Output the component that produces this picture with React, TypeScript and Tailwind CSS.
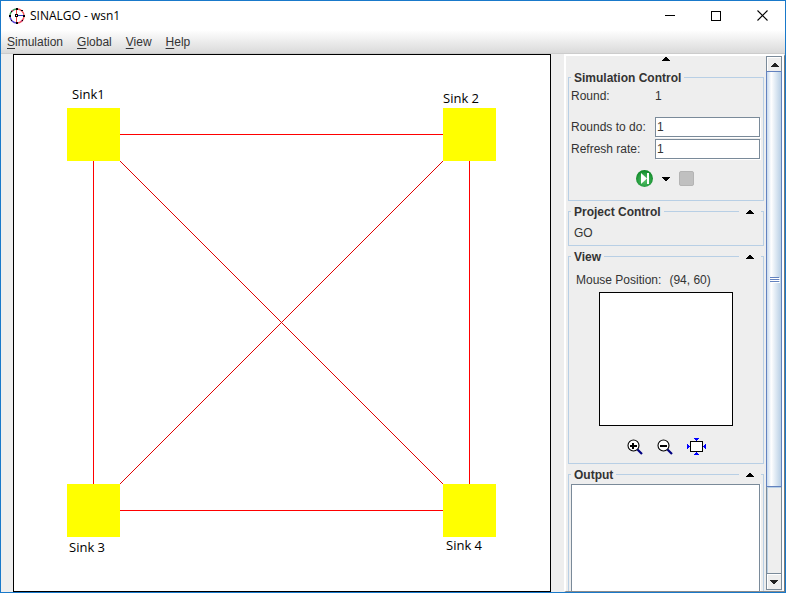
import React, { useState } from "react";

const NODES = [
  { name: "Sink1", box: "left-[53px] top-[53px]", label: "left-[58px] top-[31px]" },
  { name: "Sink 2", box: "left-[429px] top-[53px]", label: "left-[429px] top-[35px]" },
  { name: "Sink 3", box: "left-[53px] top-[429px]", label: "left-[55px] top-[484px]" },
  { name: "Sink 4", box: "left-[429px] top-[429px]", label: "left-[432px] top-[482px]" },
];

const MENUS = ["Simulation", "Global", "View", "Help"];

function Arrow({ down = false }: { down?: boolean }) {
  return (
    <svg width="8" height="4" viewBox="0 0 8 4" shapeRendering="crispEdges" aria-hidden="true">
      {down ? (
        <path d="M0 0h8v1H0zM1 1h6v1H1zM2 2h4v1H2zM3 3h2v1H3z" fill="currentColor" />
      ) : (
        <path d="M3 0h2v1H3zM2 1h4v1H2zM1 2h6v1H1zM0 3h8v1H0z" fill="currentColor" />
      )}
    </svg>
  );
}

function AppIcon() {
  return (
    <svg width="16" height="16" viewBox="0 0 16 16" aria-hidden="true">
      <g fill="none" strokeWidth="1.5">
        <path d="M8 1A7 7 0 0 1 15 8" stroke="#f0525c" />
        <path d="M15 8A7 7 0 0 1 8 15" stroke="#f0525c" />
        <path d="M8 15A7 7 0 0 1 1 8" stroke="#5a48d0" />
        <path d="M1 8A7 7 0 0 1 8 1" stroke="#3a9a5a" />
        <path d="M2.500 3.800 4 2.300M12 13.600l1.500-1.500" stroke="#d03a70" />
      </g>
      <g shapeRendering="crispEdges">
        <path d="M7 2h1v12H7z" fill="#f04040" />
        <path d="M9 7h5v1H9z" fill="#3434c8" />
        <path d="M7 0h2v2H7zM7 14h2v2H7zM0 7h2v2H0zM14 7h2v2h-2zM6 6h3v3H6zM2 3h1v1H2zM12 2h2v1h-2zM2 12h1v1H2zM13 12h1v1h-1z" fill="#000" />
        <path d="M7 7h1v1H7z" fill="#fff" />
      </g>
    </svg>
  );
}

function RunIcon() {
  return (
    <svg width="17" height="17" viewBox="0 0 17 17" aria-hidden="true">
      <defs>
        <radialGradient id="run" cx="0.5" cy="0.6" r="0.55">
          <stop offset="0" stopColor="#5cc46c" />
          <stop offset="0.6" stopColor="#2fa548" />
          <stop offset="1" stopColor="#128a2a" />
        </radialGradient>
      </defs>
      <circle cx="8.5" cy="8.5" r="8.5" fill="url(#run)" />
      <path d="M5 3l6 5.500-6 5.500z" fill="#fff" />
      <path d="M11 3h2v11h-2z" fill="#fff" />
    </svg>
  );
}

function ZoomIcon({ plus = false }: { plus?: boolean }) {
  return (
    <svg width="16" height="16" viewBox="0 0 16 16" aria-hidden="true">
      <circle cx="6.500" cy="6.500" r="5.500" fill="#fff" stroke="#000" strokeWidth="1.100" />
      <g shapeRendering="crispEdges">
        <path d="M3 6h7v2H3z" fill="#000" />
        {plus && <path d="M5 4h2v6H5z" fill="#000" />}
      </g>
      <path d="M10.500 10.500l4.500 4.500" stroke="#000080" strokeWidth="2.200" />
    </svg>
  );
}

function FitIcon() {
  return (
    <svg width="19" height="17" viewBox="0 0 19 17" shapeRendering="crispEdges" aria-hidden="true">
      <rect x="3.500" y="3.500" width="12" height="10" fill="#fff" stroke="#000" />
      <path
        d="M7 0h5v1H7zM8 1h3v1H8zM9 2h1v1H9zM7 16h5v1H7zM8 15h3v1H8zM9 14h1v1H9zM0 6h1v5H0zM1 7h1v3H1zM2 8h1v1H2zM18 6h1v5h-1zM17 7h1v3h-1zM16 8h1v1h-1z"
        fill="#0000ff"
      />
    </svg>
  );
}

function Panel({
  title,
  collapsible = true,
  className = "",
  children,
}: {
  title: string;
  collapsible?: boolean;
  className?: string;
  children: React.ReactNode;
}) {
  return (
    <section className={`border border-[#b8cfe5] ${className}`}>
      <header className="-mt-[9px] -mb-[2px] flex h-[18px] items-center justify-between px-[2px]">
        <h2 className="bg-[#eeeeee] px-[3px] font-bold">{title}</h2>
        {collapsible && (
          <button type="button" aria-label={`Collapse ${title}`} className="flex h-4 w-[22px] items-center justify-center bg-[#eeeeee] text-black">
            <Arrow />
          </button>
        )}
      </header>
      {children}
    </section>
  );
}

function Field({ id, label }: { id: string; label: string }) {
  const [value, setValue] = useState("1");
  return (
    <div className="flex h-5 items-center">
      <label htmlFor={id} className="w-[84px] shrink-0">
        {label}
      </label>
      <input
        id={id}
        value={value}
        onChange={(e) => setValue(e.target.value)}
        className="h-5 min-w-0 flex-1 border border-[#7a8a99] bg-white px-px text-[#333333] shadow-[1px_1px_0_#ffffff] outline-none"
      />
    </div>
  );
}

function ScrollBar() {
  return (
    <div className="flex w-4 shrink-0 flex-col border border-[#7a8a99] bg-[#eeeeee]">
      <button type="button" aria-label="Scroll up" className="flex h-[14px] shrink-0 items-center justify-center border-t border-l border-white text-[#222222]">
        <Arrow />
      </button>
      <div className="-mx-px flex h-[416px] flex-col items-center justify-center gap-px border border-[#6382bf] bg-linear-to-r from-[#c8daee] via-white via-30% to-[#b8cfe5]">
        <span className="h-px w-[9px] bg-[#6382bf] shadow-[1px_1px_0_#ffffff]" />
        <span className="h-px w-[9px] bg-[#6382bf] shadow-[1px_1px_0_#ffffff]" />
        <span className="h-px w-[9px] bg-[#6382bf] shadow-[1px_1px_0_#ffffff]" />
      </div>
      <div className="flex-1 border-t border-l border-[#b8cfe5]" />
      <button type="button" aria-label="Scroll down" className="flex h-4 shrink-0 items-center justify-center border-t border-[#7a8a99] text-[#222222] shadow-[inset_1px_1px_0_#ffffff]">
        <Arrow down />
      </button>
    </div>
  );
}

export default function App() {
  return (
    <div className="flex min-h-screen flex-col border border-[#1979ca] bg-[#eeeeee] font-['Liberation_Sans',Arial,sans-serif] text-xs text-[#333333]">
      <header className="flex h-[29px] shrink-0 items-center bg-white pl-2">
        <AppIcon />
        <h1 className="ml-[5px] flex-1 font-['Open_Sans','Segoe_UI',sans-serif] text-xs text-black">SINALGO - wsn1</h1>
        <button type="button" aria-label="Minimize" className="flex h-full w-[46px] items-center justify-center">
          <span className="h-px w-[10px] bg-black" />
        </button>
        <button type="button" aria-label="Maximize" className="flex h-full w-[46px] items-center justify-center">
          <span className="size-[10px] border border-black" />
        </button>
        <button type="button" aria-label="Close" className="flex h-full w-[46px] items-center justify-center">
          <svg width="11" height="11" viewBox="0 0 11 11" aria-hidden="true">
            <path d="M.5.5l10 10M10.500.5l-10 10" stroke="#000" strokeWidth="1.100" />
          </svg>
        </button>
      </header>
      <nav className="flex h-6 shrink-0 items-center gap-[14px] border-b border-[#cccccc] bg-linear-to-b from-white to-[#dadada] pl-[6px]">
        {MENUS.map((name) => (
          <button key={name} type="button">
            <span className="underline underline-offset-2">{name[0]}</span>
            {name.slice(1)}
          </button>
        ))}
      </nav>

      <main className="flex flex-1 pl-3">
        <div className="relative mr-[13px] min-h-[538px] flex-1 overflow-hidden border border-black bg-white">
          <svg className="absolute inset-0 size-full" shapeRendering="crispEdges" aria-hidden="true">
            <g fill="#ff0000">
              <rect x="106" y="79" width="323" height="1" />
              <rect x="106" y="455" width="323" height="1" />
              <rect x="79" y="106" width="1" height="323" />
              <rect x="455" y="106" width="1" height="323" />
            </g>
            <path d="M106 106L429 429M429 106L106 429" stroke="#e00000" strokeWidth="1" />
          </svg>
          {NODES.map((node) => (
            <React.Fragment key={node.name}>
              <div className={`absolute size-[53px] bg-[#ffff00] ${node.box}`} />
              <span className={`absolute font-['Open_Sans',Calibri,sans-serif] text-[13px] leading-4 whitespace-nowrap text-black ${node.label}`}>
                {node.name}
              </span>
            </React.Fragment>
          ))}
        </div>

        <aside className="flex w-[221px] shrink-0 border-t-2 border-r border-b border-l-2 border-t-white border-r-[#7a7a7a] border-b-[#8a8a8a] border-l-white">
          <div className="flex min-w-0 flex-1 flex-col pr-[2px] pl-[2px]">
            <button type="button" aria-label="Collapse all" className="flex h-[21px] shrink-0 justify-center pt-px text-black">
              <Arrow />
            </button>

            <Panel title="Simulation Control" collapsible={false} className="h-[124px] shrink-0">
              <div className="pr-[3px] pl-[2px]">
                <dl className="flex h-[22px] items-center">
                  <dt className="w-[84px]">Round:</dt>
                  <dd>1</dd>
                </dl>
                <div className="mt-[10px] flex flex-col gap-[2px]">
                  <Field id="rounds" label="Rounds to do:" />
                  <Field id="refresh" label="Refresh rate:" />
                </div>
                <div className="mt-[11px] flex items-center justify-center pr-[2px]">
                  <button type="button" aria-label="Run">
                    <RunIcon />
                  </button>
                  <button type="button" aria-label="Run options" className="mx-[9px] text-black">
                    <Arrow down />
                  </button>
                  <button type="button" aria-label="Stop" disabled className="size-[15px] rounded-xs border border-[#b4b4b4] bg-[#c0c0c0]" />
                </div>
              </div>
            </Panel>

            <Panel title="Project Control" className="mt-[10px] h-[35px] shrink-0">
              <button type="button" className="ml-[5px] block leading-7">
                GO
              </button>
            </Panel>

            <Panel title="View" className="mt-[10px] h-[208px] shrink-0">
              <p className="flex h-7 items-center gap-2 pt-1 pl-[7px]">
                <span>Mouse Position:</span>
                <span>(94, 60)</span>
              </p>
              <div className="mx-auto size-[134px] border border-black bg-white" />
              <div className="mt-3 flex items-center justify-center gap-[14px]">
                <button type="button" aria-label="Zoom in">
                  <ZoomIcon plus />
                </button>
                <button type="button" aria-label="Zoom out">
                  <ZoomIcon />
                </button>
                <button type="button" aria-label="Zoom to fit">
                  <FitIcon />
                </button>
              </div>
            </Panel>

            <Panel title="Output" className="mt-[10px] flex flex-1 flex-col border-b-0">
              <textarea
                aria-label="Output"
                readOnly
                className="mt-[2px] mr-[3px] ml-[2px] block min-h-0 flex-1 resize-none border border-b-0 border-[#7a8a99] bg-white shadow-[1px_0_0_#ffffff] outline-none"
              />
            </Panel>
          </div>
          <div className="flex border-r-2 border-white pb-px">
            <ScrollBar />
          </div>
        </aside>
      </main>
    </div>
  );
}
